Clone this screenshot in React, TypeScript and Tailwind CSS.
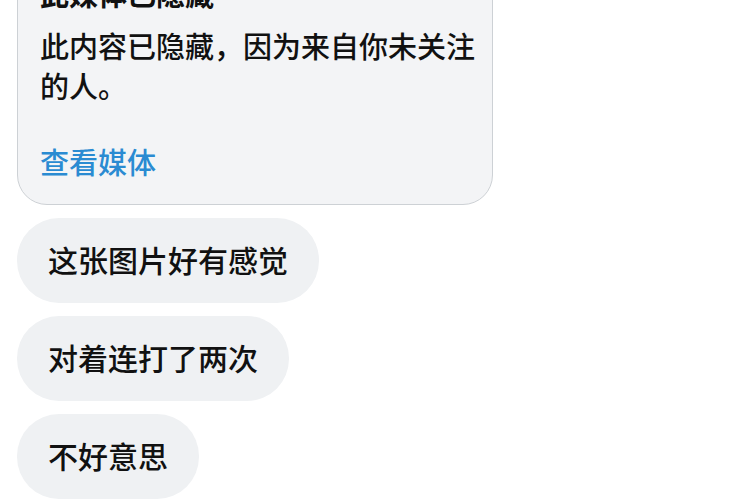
const messages = ['这张图片好有感觉', '对着连打了两次', '不好意思']

function HiddenMediaCard() {
  return (
    <div className="-mt-[50px] w-[476px] rounded-[30px] border border-[#cdd1d5] bg-[#f3f4f6] pb-[23px] pl-[22px] pr-[14px] pt-[22px]">
      <p className="mb-[12px] text-[29px] font-bold leading-[40px] text-[#111]">此媒体已隐藏</p>
      <p className="text-[29px] font-medium leading-[40px] text-[#111]">此内容已隐藏，因为来自你未关注的人。</p>
      <p className="mt-[36px] text-[29px] font-medium leading-[40px] text-[#2a8bd2]">查看媒体</p>
    </div>
  )
}

export default function App() {
  return (
    <div
      className="h-[500px] w-[750px] overflow-hidden bg-white pl-[17px]"
      style={{ fontFamily: '"Noto Sans CJK SC", "Noto Sans", sans-serif' }}
    >
      <HiddenMediaCard />
      <div className="mt-[13px] flex flex-col items-start gap-[13px]">
        {messages.map(text => (
          <div key={text} className="rounded-[42px] bg-[#eff1f3] px-[31px] pb-[23px] pt-[21px] text-[30px] font-medium leading-[41px] text-[#111]">
            {text}
          </div>
        ))}
      </div>
    </div>
  )
}
